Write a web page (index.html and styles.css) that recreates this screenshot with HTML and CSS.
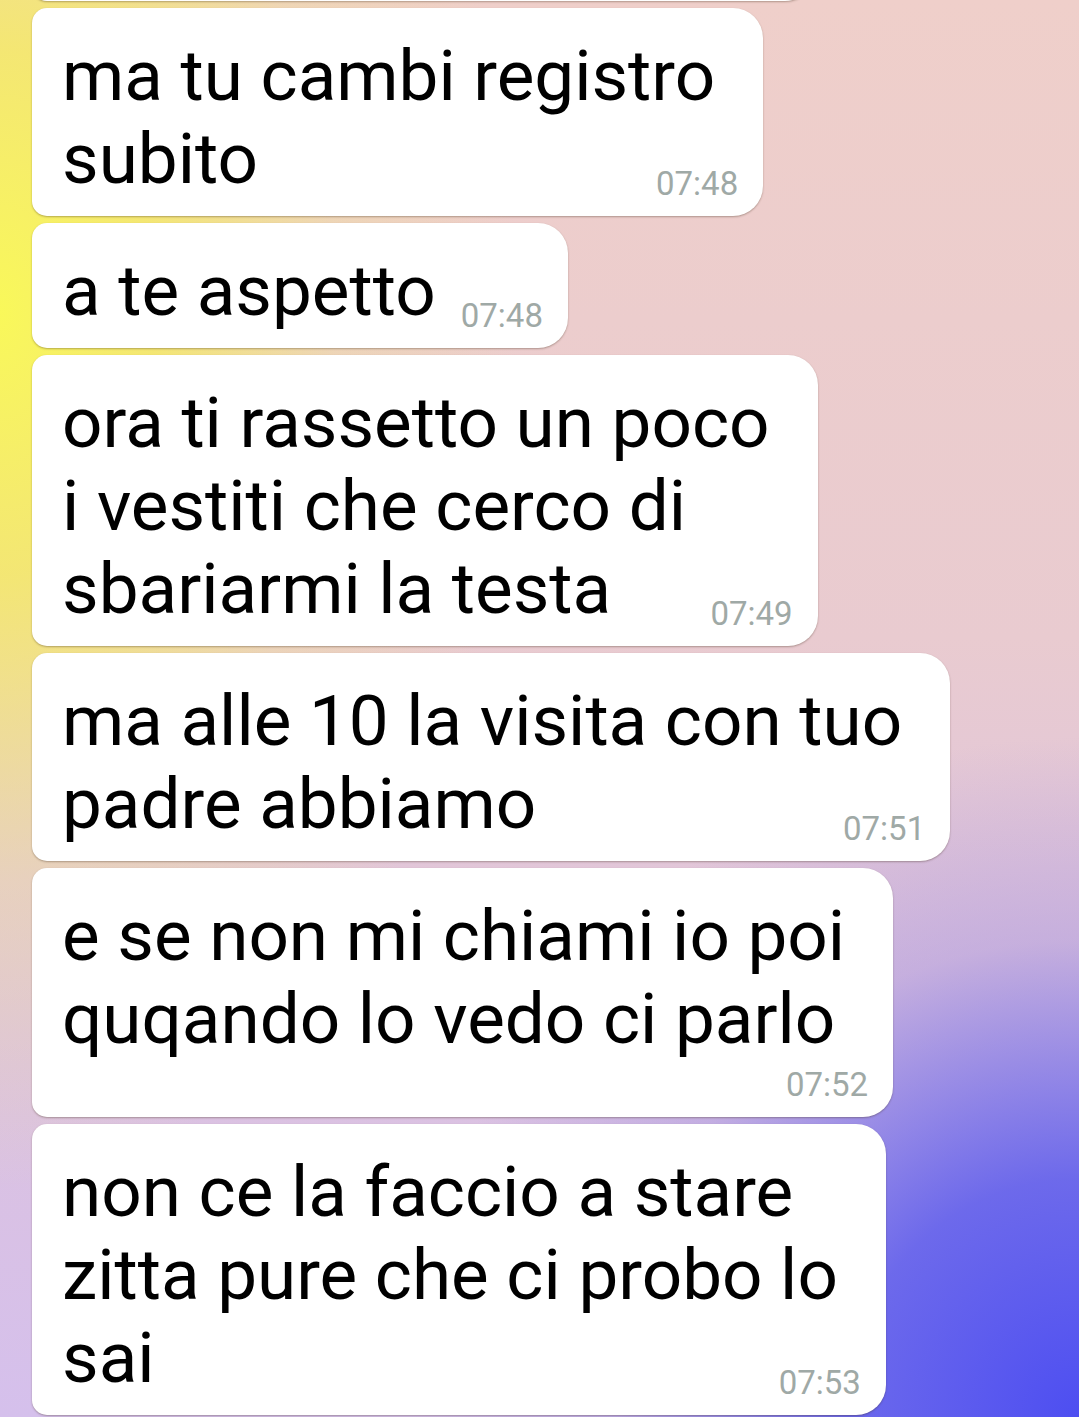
FILE: index.html
```html
<!DOCTYPE html>
<html lang="it">
<head>
    <meta charset="UTF-8">
    <meta name="viewport" content="width=device-width, initial-scale=1.0">
    <title>chat</title>
    <link rel="stylesheet" href="styles.css">
</head>
<body>
    <div class="chat">
        <div class="bubble bubble-cut"></div>

        <div class="bubble">
            <p class="text">ma tu cambi registro<br>subito</p>
            <span class="time">07:48</span>
        </div>

        <div class="bubble bubble-row">
            <p class="text">a te aspetto</p>
            <span class="time">07:48</span>
        </div>

        <div class="bubble">
            <p class="text">ora ti rassetto un poco<br>i vestiti che cerco di<br>sbariarmi la testa</p>
            <span class="time">07:49</span>
        </div>

        <div class="bubble">
            <p class="text">ma alle 10 la visita con tuo<br>padre abbiamo</p>
            <span class="time">07:51</span>
        </div>

        <div class="bubble bubble-stack">
            <p class="text">e se non mi chiami io poi<br>quqando lo vedo ci parlo</p>
            <span class="time">07:52</span>
        </div>

        <div class="bubble">
            <p class="text">non ce la faccio a stare<br>zitta pure che ci probo lo<br>sai</p>
            <span class="time">07:53</span>
        </div>
    </div>
</body>
</html>
```

FILE: styles.css
```css
body {
  margin: 0;
  height: 100vh;
  overflow: hidden;
  font-family: Roboto, "Noto Sans", sans-serif;
  background:
    radial-gradient(ellipse 62% 48% at 100% 100%, #4d4ef1 0%, rgba(90, 90, 236, 0.85) 35%, rgba(150, 135, 225, 0.35) 70%, rgba(200, 180, 225, 0) 100%),
    radial-gradient(ellipse 48% 62% at 0% 22%, #f9f85a 0%, rgba(245, 235, 100, 0.85) 30%, rgba(240, 225, 150, 0.4) 65%, rgba(240, 215, 190, 0) 100%),
    linear-gradient(to bottom, #efcfca 0%, #e9cbd0 45%, #dcc2e0 75%, #d5c0ec 100%);
}

.chat {
  display: flex;
  flex-direction: column;
  align-items: flex-start;
  gap: 7px;
  padding: 0 32px;
}

.bubble {
  display: flex;
  flex-direction: column;
  background-color: #fff;
  border-radius: 15px 30px 30px 15px;
  box-shadow: 0 1px 2px rgba(60, 40, 20, 0.35);
  padding: 26px 25px 16px 30px;
}

/* bottom edge of the previous message, scrolled away */
.bubble-cut {
  width: 783px;
  height: 60px;
  margin-top: -59px;
  padding: 0;
  box-sizing: border-box;
}

.text {
  margin: 0;
  padding-right: 23px;
  font-size: 71px;
  line-height: 83px;
  color: #000;
  white-space: nowrap;
}

.time {
  align-self: flex-end;
  margin-top: -33px;
  font-size: 33px;
  line-height: 33px;
  color: #9fa9a6;
}

.bubble-row {
  flex-direction: row;
  align-items: flex-end;
  gap: 25px;
}

.bubble-row .text {
  padding-right: 0;
}

.bubble-row .time {
  margin-top: 0;
}

.bubble-stack .time {
  margin-top: 8px;
}
```
